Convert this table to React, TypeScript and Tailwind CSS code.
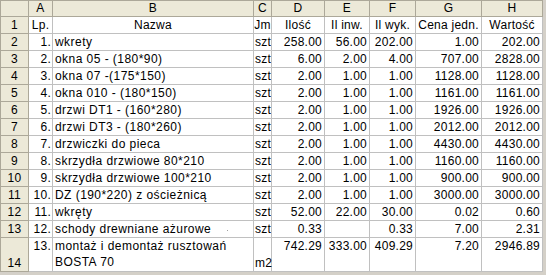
import React from "react";

type Row = {
  n: string;
  lp: string;
  name: React.ReactNode;
  jm: string;
  d: string;
  e: string;
  f: string;
  g: string;
  h: string;
};

const rows: Row[] = [
  { n: "2", lp: "1.", name: "wkrety", jm: "szt", d: "258.00", e: "56.00", f: "202.00", g: "1.00", h: "202.00" },
  { n: "3", lp: "2.", name: "okna 05 - (180*90)", jm: "szt", d: "6.00", e: "2.00", f: "4.00", g: "707.00", h: "2828.00" },
  { n: "4", lp: "3.", name: "okna 07 -(175*150)", jm: "szt", d: "2.00", e: "1.00", f: "1.00", g: "1128.00", h: "1128.00" },
  { n: "5", lp: "4.", name: "okna 010 - (180*150)", jm: "szt", d: "2.00", e: "1.00", f: "1.00", g: "1161.00", h: "1161.00" },
  { n: "6", lp: "5.", name: "drzwi DT1 - (160*280)", jm: "szt", d: "2.00", e: "1.00", f: "1.00", g: "1926.00", h: "1926.00" },
  { n: "7", lp: "6.", name: "drzwi DT3 - (180*260)", jm: "szt", d: "2.00", e: "1.00", f: "1.00", g: "2012.00", h: "2012.00" },
  { n: "8", lp: "7.", name: "drzwiczki do pieca", jm: "szt", d: "2.00", e: "1.00", f: "1.00", g: "4430.00", h: "4430.00" },
  { n: "9", lp: "8.", name: "skrzydła drzwiowe 80*210", jm: "szt", d: "2.00", e: "1.00", f: "1.00", g: "1160.00", h: "1160.00" },
  { n: "10", lp: "9.", name: "skrzydła drzwiowe 100*210", jm: "szt", d: "2.00", e: "1.00", f: "1.00", g: "900.00", h: "900.00" },
  { n: "11", lp: "10.", name: "DZ (190*220) z ościeżnicą", jm: "szt", d: "2.00", e: "1.00", f: "1.00", g: "3000.00", h: "3000.00" },
  { n: "12", lp: "11.", name: "wkręty", jm: "szt", d: "52.00", e: "22.00", f: "30.00", g: "0.02", h: "0.60" },
  {
    n: "13",
    lp: "12.",
    name: (
      <span className="relative">
        schody drewniane ażurowe
        <span className="absolute left-[172px] top-[8px] h-px w-px bg-[#a0a0a0]" />
      </span>
    ),
    jm: "szt",
    d: "0.33",
    e: "",
    f: "0.33",
    g: "7.00",
    h: "2.31",
  },
];

const hdr =
  "bg-[#ECE9D8] border-r border-b border-[#ACA899] flex items-end justify-center h-[17px] leading-[15px]";
const cell =
  "border-r border-b border-[#C0C0C0] h-[17px] flex items-end leading-[15px] whitespace-nowrap overflow-hidden";
const txt = "tracking-[0.45px]";

export default function App() {
  return (
    <div
      className="w-[546px] h-[275px] bg-white text-black text-[12px] tracking-[0.25px] overflow-hidden"
      style={{ fontFamily: '"Liberation Sans", Arial, sans-serif' }}
    >
      <div className="w-[546px] h-[275px] border-r-[3px] border-b-[3px] border-[#D4D0C8] box-border">
        <div className="grid grid-cols-[29px_24px_201px_18px_53px_45px_46px_66px_61px]">
          {/* column headers */}
          <div className={`${hdr} border-l border-t`} />
          {["A", "B", "C", "D", "E", "F", "G", "H"].map((c) => (
            <div key={c} className={`${hdr} border-t`}>
              {c}
            </div>
          ))}

          {/* row 1 */}
          <div className={`${hdr} border-l`}>1</div>
          <div className={`${cell} justify-center`}>Lp.</div>
          <div className={`${cell} justify-center`}>Nazwa</div>
          <div className={`${cell} justify-center`}>Jm</div>
          <div className={`${cell} justify-center`}>Ilość</div>
          <div className={`${cell} justify-center`}>Il inw.</div>
          <div className={`${cell} justify-center`}>Il wyk.</div>
          <div className={`${cell} justify-center`}>Cena jedn.</div>
          <div className={`${cell} justify-center`}>Wartość</div>

          {rows.map((r) => (
            <React.Fragment key={r.n}>
              <div className={`${hdr} border-l`}>{r.n}</div>
              <div className={`${cell} justify-end pr-[1px]`}>{r.lp}</div>
              <div className={`${cell} ${txt} pl-[2px] overflow-visible`}>{r.name}</div>
              <div className={`${cell} pl-[1px]`}>{r.jm}</div>
              <div className={`${cell} justify-end pr-[2px]`}>{r.d}</div>
              <div className={`${cell} justify-end pr-[2px]`}>{r.e}</div>
              <div className={`${cell} justify-end pr-[2px]`}>{r.f}</div>
              <div className={`${cell} justify-end pr-[2px]`}>{r.g}</div>
              <div className={`${cell} justify-end pr-[2px]`}>{r.h}</div>
            </React.Fragment>
          ))}

          {/* row 14 (double height) */}
          <div className="bg-[#ECE9D8] border-l border-r border-b border-[#ACA899] flex items-end justify-center h-[34px] leading-[15px]">
            14
          </div>
          <div className="border-r border-b border-[#C0C0C0] h-[34px] flex justify-end items-start pr-[1px] leading-[16px]">
            13.
          </div>
          <div className={`border-r border-b border-[#C0C0C0] h-[34px] pl-[2px] leading-[16px] ${txt}`}>
            montaż i demontaż rusztowań
            <br />
            BOSTA 70
          </div>
          <div className="border-r border-b border-[#C0C0C0] h-[34px] pl-[1px] flex items-end leading-[15px]">
            m2
          </div>
          {["742.29", "333.00", "409.29", "7.20", "2946.89"].map((v, i) => (
            <div
              key={i}
              className="border-r border-b border-[#C0C0C0] h-[34px] flex justify-end items-start pr-[2px] leading-[16px]"
            >
              {v}
            </div>
          ))}
        </div>
      </div>
    </div>
  );
}
